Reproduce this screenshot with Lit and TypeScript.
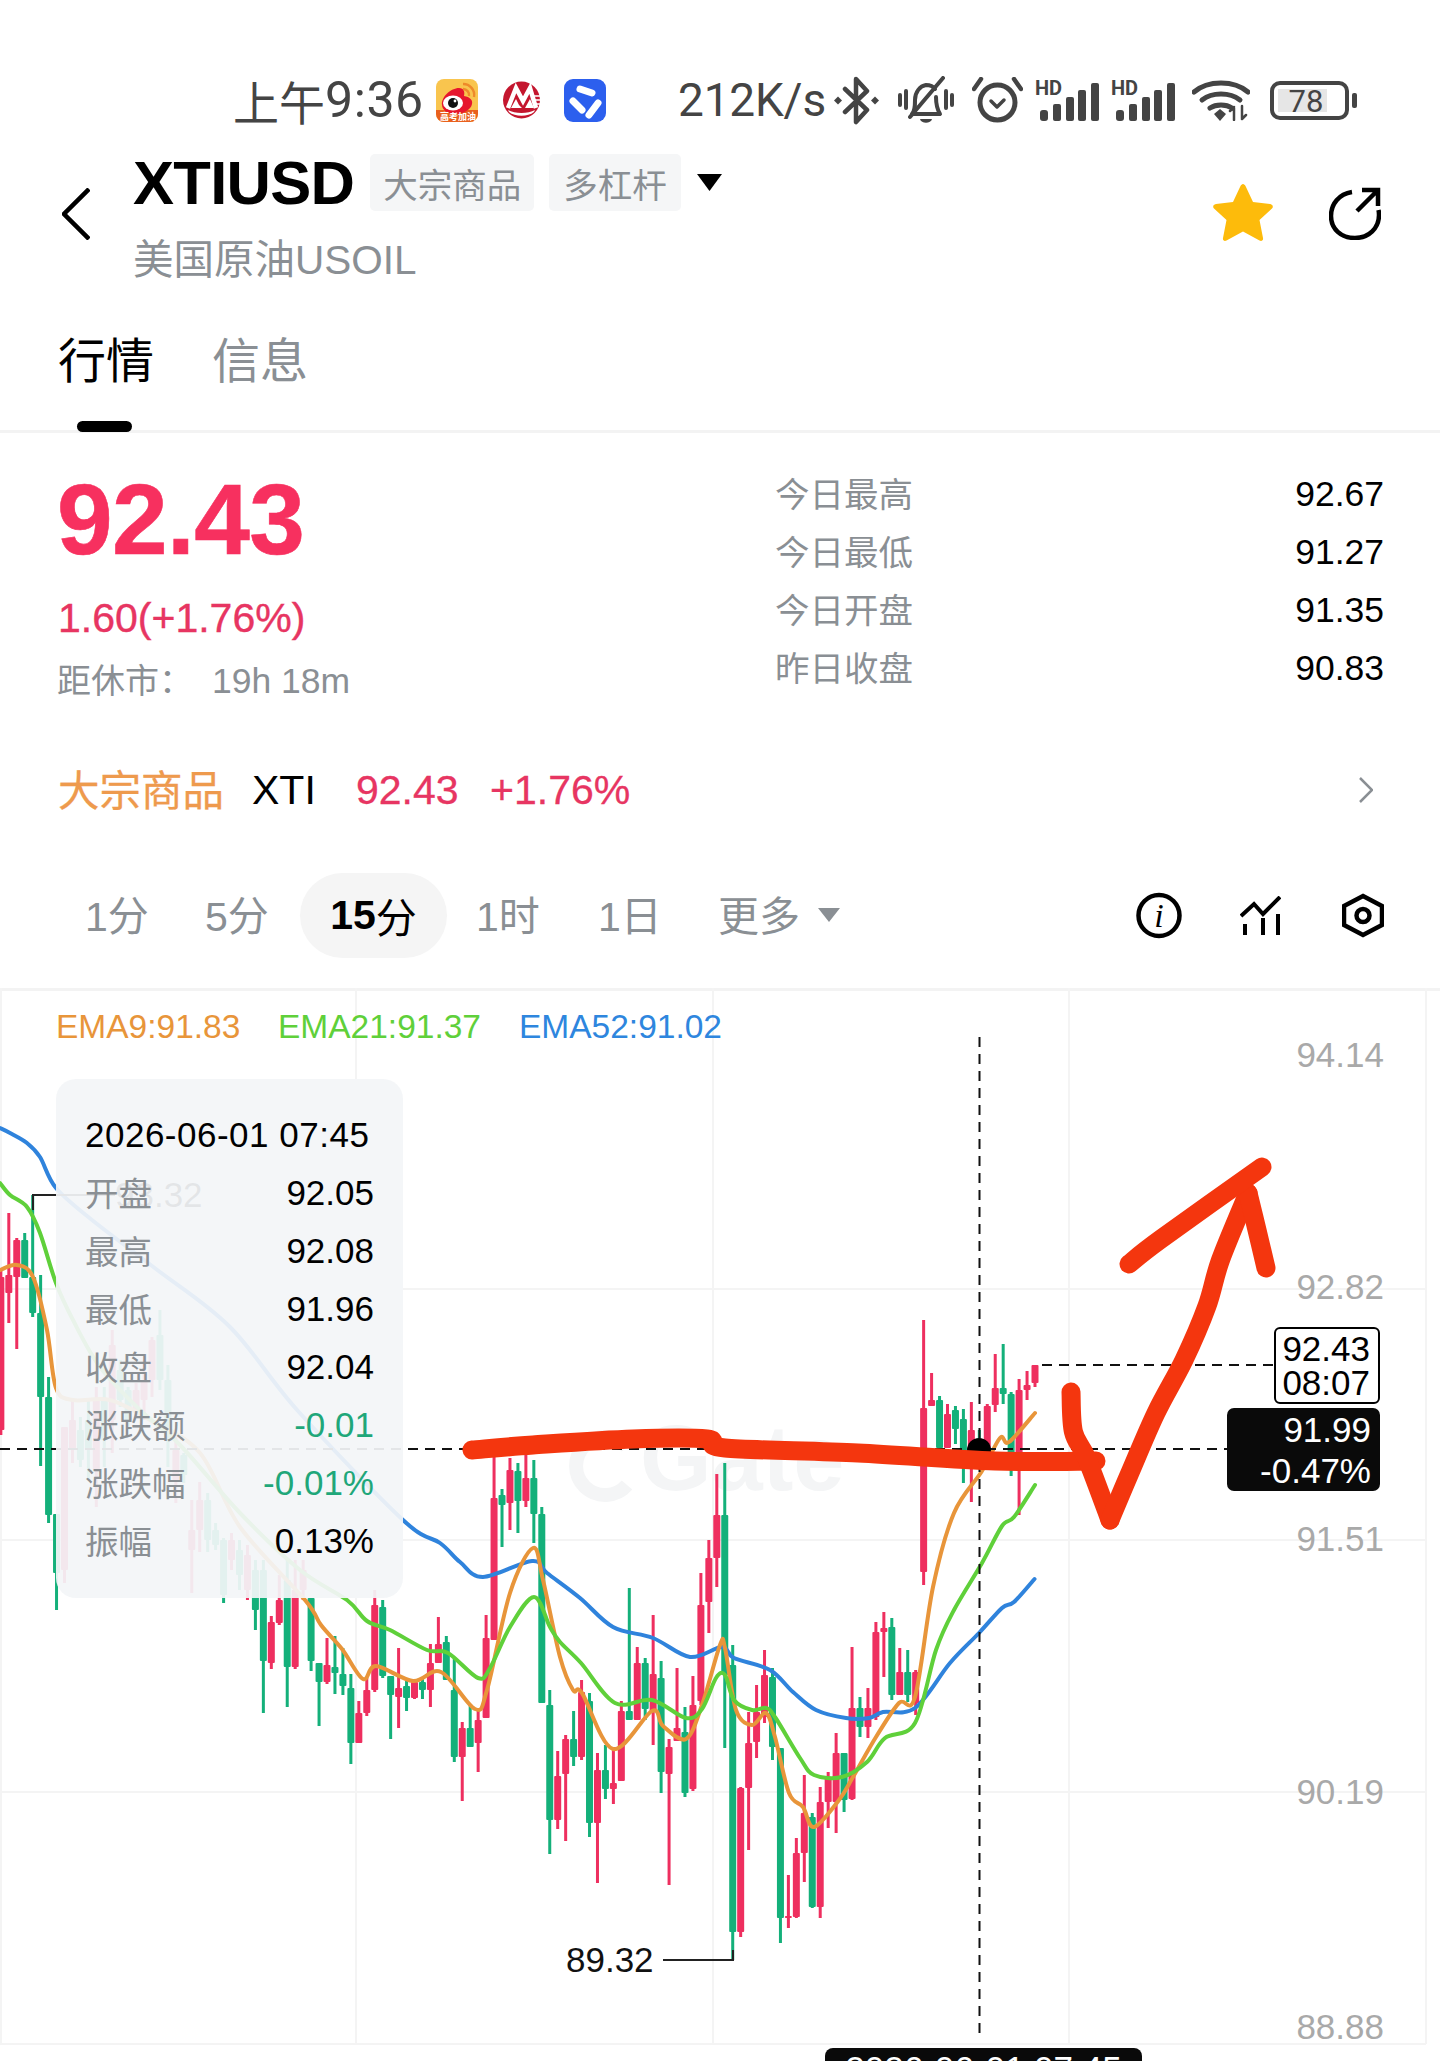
import { LitElement, html, css, svg } from "lit";
import { customElement } from "lit/decorators.js";

const RED = "#ee2f5f";
const GREEN = "#14b07a";

type C = [number, number, number, number, number, 0 | 1];
// index, wick top, wick bottom, body top, body bottom, 0 = red 1 = green
const CANDLES: C[] = [
  [0, 1270, 1435, 1277, 1430, 0], [1, 1213, 1323, 1275, 1293, 0], [2, 1238, 1349, 1240, 1277, 0],
  [3, 1233, 1278, 1240, 1278, 1], [4, 1195, 1317, 1277, 1313, 1], [5, 1275, 1466, 1313, 1397, 1],
  [6, 1377, 1523, 1397, 1515, 1], [7, 1514, 1610, 1514, 1573, 1], [8, 1427, 1583, 1427, 1570, 0],
  [9, 1400, 1463, 1420, 1450, 0], [10, 1417, 1467, 1430, 1460, 1], [11, 1400, 1480, 1420, 1450, 1],
  [12, 1387, 1507, 1400, 1470, 0], [13, 1387, 1467, 1400, 1440, 1], [14, 1330, 1453, 1345, 1420, 0],
  [15, 1360, 1407, 1370, 1400, 1], [16, 1387, 1430, 1390, 1420, 1], [17, 1383, 1417, 1390, 1410, 0],
  [18, 1360, 1420, 1380, 1400, 0], [19, 1337, 1397, 1340, 1380, 0], [20, 1310, 1390, 1335, 1380, 1],
  [21, 1365, 1467, 1380, 1440, 1], [22, 1437, 1503, 1450, 1480, 0], [23, 1453, 1483, 1455, 1475, 1],
  [24, 1500, 1593, 1530, 1550, 0], [25, 1482, 1552, 1500, 1530, 0], [26, 1493, 1552, 1500, 1540, 1],
  [27, 1523, 1550, 1530, 1545, 1], [28, 1538, 1603, 1540, 1595, 1], [29, 1533, 1570, 1540, 1560, 0],
  [30, 1540, 1590, 1550, 1575, 1], [31, 1545, 1600, 1555, 1590, 0], [32, 1560, 1630, 1570, 1610, 1],
  [33, 1560, 1713, 1570, 1661, 1], [34, 1616, 1669, 1622, 1663, 0], [35, 1575, 1625, 1600, 1623, 0],
  [36, 1560, 1707, 1580, 1667, 1], [37, 1560, 1669, 1590, 1667, 0], [38, 1560, 1600, 1570, 1590, 0],
  [39, 1598, 1671, 1598, 1661, 1], [40, 1663, 1726, 1663, 1682, 1], [41, 1638, 1684, 1665, 1682, 0],
  [42, 1636, 1694, 1667, 1673, 1], [43, 1648, 1695, 1674, 1686, 1], [44, 1674, 1764, 1688, 1743, 1],
  [45, 1701, 1743, 1713, 1743, 0], [46, 1678, 1716, 1690, 1713, 0], [47, 1590, 1692, 1605, 1690, 0],
  [48, 1600, 1678, 1607, 1676, 1], [49, 1676, 1739, 1676, 1695, 1], [50, 1648, 1728, 1688, 1697, 0],
  [51, 1678, 1711, 1686, 1698, 1], [52, 1680, 1699, 1682, 1698, 0], [53, 1678, 1699, 1682, 1690, 1],
  [54, 1644, 1707, 1663, 1690, 0], [55, 1617, 1663, 1644, 1663, 0], [56, 1636, 1680, 1642, 1680, 1],
  [57, 1659, 1762, 1690, 1757, 1], [58, 1722, 1801, 1728, 1757, 0], [59, 1705, 1747, 1728, 1747, 1],
  [60, 1709, 1772, 1720, 1743, 0], [61, 1615, 1718, 1638, 1718, 0], [62, 1445, 1640, 1498, 1640, 0],
  [63, 1489, 1547, 1495, 1505, 1], [64, 1458, 1530, 1470, 1503, 0], [65, 1463, 1533, 1471, 1501, 1],
  [66, 1445, 1507, 1478, 1501, 0], [67, 1460, 1543, 1478, 1514, 1], [68, 1507, 1703, 1514, 1703, 1],
  [69, 1690, 1854, 1705, 1820, 1], [70, 1751, 1829, 1776, 1820, 0], [71, 1735, 1841, 1739, 1774, 0],
  [72, 1711, 1766, 1739, 1757, 1], [73, 1680, 1760, 1692, 1757, 0], [74, 1693, 1837, 1701, 1823, 1],
  [75, 1753, 1883, 1770, 1823, 0], [76, 1745, 1799, 1770, 1789, 1], [77, 1747, 1804, 1783, 1789, 0],
  [78, 1701, 1781, 1711, 1781, 0], [79, 1588, 1720, 1711, 1720, 1], [80, 1647, 1720, 1663, 1720, 0],
  [81, 1658, 1720, 1663, 1709, 1], [82, 1615, 1745, 1674, 1712, 0], [83, 1661, 1793, 1678, 1772, 1],
  [84, 1739, 1885, 1747, 1774, 0], [85, 1668, 1741, 1728, 1741, 0], [86, 1707, 1797, 1732, 1793, 1],
  [87, 1676, 1791, 1705, 1789, 0], [88, 1573, 1705, 1605, 1701, 0], [89, 1540, 1633, 1558, 1602, 0],
  [90, 1474, 1587, 1515, 1558, 0], [91, 1463, 1748, 1515, 1675, 1], [92, 1645, 1960, 1665, 1932, 1],
  [93, 1787, 1937, 1788, 1932, 0], [94, 1712, 1850, 1743, 1788, 0], [95, 1685, 1758, 1712, 1742, 0],
  [96, 1650, 1723, 1675, 1717, 0], [97, 1668, 1760, 1677, 1747, 1], [98, 1748, 1943, 1748, 1918, 1],
  [99, 1875, 1928, 1916, 1918, 0], [100, 1838, 1918, 1853, 1917, 0], [101, 1775, 1882, 1813, 1853, 0],
  [102, 1813, 1908, 1817, 1907, 1], [103, 1787, 1918, 1802, 1907, 0], [104, 1772, 1828, 1777, 1802, 0],
  [105, 1733, 1833, 1753, 1802, 0], [106, 1753, 1812, 1753, 1800, 1], [107, 1647, 1800, 1708, 1799, 0],
  [108, 1697, 1737, 1708, 1727, 1], [109, 1688, 1738, 1708, 1727, 0], [110, 1622, 1720, 1632, 1717, 0],
  [111, 1612, 1677, 1628, 1632, 0], [112, 1618, 1700, 1627, 1695, 1], [113, 1648, 1695, 1672, 1695, 0],
  [114, 1650, 1702, 1672, 1695, 1], [115, 1670, 1715, 1672, 1703, 0], [116, 1320, 1585, 1408, 1572, 0],
  [117, 1373, 1406, 1400, 1406, 0], [118, 1396, 1450, 1400, 1448, 1], [119, 1404, 1448, 1414, 1448, 0],
  [120, 1406, 1444, 1410, 1429, 1], [121, 1409, 1483, 1419, 1452, 1], [122, 1402, 1502, 1430, 1450, 0],
  [123, 1430, 1455, 1440, 1452, 1], [124, 1404, 1459, 1406, 1448, 0], [125, 1354, 1412, 1388, 1405, 0],
  [126, 1344, 1404, 1388, 1394, 1], [127, 1392, 1476, 1394, 1455, 1], [128, 1379, 1515, 1390, 1455, 0],
  [129, 1371, 1400, 1385, 1390, 0], [130, 1365, 1387, 1365, 1383, 0],
];

const BLUE: number[][] = [[0,1128],[10,1133],[27,1143],[40,1157],[56,1188],[92,1220],[156,1269],[230,1327],[298,1411],[403,1520],[440,1543],[460,1562],[483,1577],[532,1561],[547,1573],[580,1598],[613,1627],[653,1638],[690,1657],[722,1647],[734,1658],[770,1670],[793,1692],[816,1710],[846,1718],[869,1718],[883,1712],[915,1708],[950,1663],[979,1633],[1002,1608],[1014,1602],[1034.5,1579]];
const LIME: number[][] = [[0,1183],[10,1195],[27,1207],[40,1233],[56,1283],[73,1320],[100,1367],[140,1410],[180,1445],[240,1513],[300,1570],[347,1600],[367,1621],[390,1630],[427,1650],[448,1653],[478,1678],[490,1668],[510,1627],[534,1597],[550,1627],[560,1642],[581,1663],[615,1703],[652,1700],[686,1718],[702,1709],[716,1678],[725,1675],[734,1700],[752,1710],[766,1708],[775,1717],[800,1758],[814,1775],[842,1777],[867,1762],[885,1738],[915,1723],[936,1650],[954,1610],[982,1563],[1002,1526],[1014,1517],[1035,1485]];
const ORANGE: number[][] = [[0,1270],[17,1265],[33,1277],[47,1330],[56,1388],[73,1400],[110,1400],[150,1420],[200,1453],[240,1527],[305,1600],[321,1625],[342,1649],[363,1679],[376,1666],[413,1681],[441,1672],[475,1709],[487,1690],[510,1593],[533,1548],[543,1580],[560,1657],[573,1690],[582,1693],[613,1749],[652,1711],[663,1726],[686,1739],[702,1705],[720,1645],[725,1648],[736,1710],[752,1725],[766,1713],[775,1737],[789,1793],[803,1807],[814,1827],[839,1800],[853,1777],[876,1737],[899,1703],[915,1697],[933,1587],[954,1513],[982,1471],[1000,1438],[1009,1442],[1035,1413]];

const INK = [
  [[472,1450],[533,1445],[633,1439],[707,1439],[725,1448],[858,1453],[995,1461],[1096,1461]],
  [[1071,1392],[1073.5,1432],[1087,1459],[1110,1520]],
  [[1110,1520],[1129,1475],[1156,1413],[1184,1360],[1207,1306],[1220.5,1260],[1248,1193]],
  [[1248,1193],[1257,1230],[1266,1268]],
  [[1129,1264],[1161,1239],[1262,1167]],
];

// Catmull-Rom through the sampled points, so the traced lines stay smooth.
const smooth = (p: number[][]) => {
  let d = `M${p[0][0]} ${p[0][1]}`;
  for (let i = 0; i < p.length - 1; i++) {
    const a = p[Math.max(i - 1, 0)], b = p[i], c = p[i + 1], e = p[Math.min(i + 2, p.length - 1)];
    const x1 = b[0] + (c[0] - a[0]) / 6, y1 = b[1] + (c[1] - a[1]) / 6;
    const x2 = c[0] - (e[0] - b[0]) / 6, y2 = c[1] - (e[1] - b[1]) / 6;
    d += `C${x1.toFixed(1)} ${y1.toFixed(1)} ${x2.toFixed(1)} ${y2.toFixed(1)} ${c[0]} ${c[1]}`;
  }
  return d;
};

const AXIS: [string, number][] = [["94.14", 1054], ["92.82", 1286], ["91.51", 1538], ["90.19", 1791], ["88.88", 2026]];
const TIP: [string, string, string][] = [
  ["开盘", "92.05", ""], ["最高", "92.08", ""], ["最低", "91.96", ""], ["收盘", "92.04", ""],
  ["涨跌额", "-0.01", "down"], ["涨跌幅", "-0.01%", "down"], ["振幅", "0.13%", ""],
];
const STATS: [string, string][] = [["今日最高", "92.67"], ["今日最低", "91.27"], ["今日开盘", "91.35"], ["昨日收盘", "90.83"]];

const hdSignal = html`<svg class="hd" viewBox="0 0 62 41">
  <text x="-2" y="15" class="hdt">HD</text>
  <rect x="3" y="30" width="8" height="11" rx="3" fill="#444"/>
  <rect x="16" y="24" width="8" height="17" rx="2" fill="#444"/>
  <rect x="29" y="17" width="8" height="24" rx="2" fill="#444"/>
  <rect x="41" y="10" width="8" height="31" rx="2" fill="#444"/>
  <rect x="54" y="3" width="8" height="38" rx="2" fill="#444"/>
</svg>`;

@customElement("app-root")
export class AppRoot extends LitElement {
  static styles = css`
    :host { display: block; width: 1440px; height: 2061px; overflow: hidden; background: #fff; color: #000;
      font-family: "Liberation Sans", "Noto Sans CJK SC", sans-serif; }
    svg { display: block; flex: none; }

    .status { height: 141px; box-sizing: border-box; padding: 60px 0 1px 233px; display: flex; align-items: center; color: #444; font-family: Roboto, "Noto Sans CJK SC", sans-serif; }
    .time, .speed { height: 80px; display: flex; align-items: center; white-space: nowrap; flex: none; font-size: 50px; letter-spacing: .6px; }
    .time { width: 189px; }
    .time .cjk { font-size: 46px; letter-spacing: 0; }
    .speed { width: 147px; margin-left: 72px; font-size: 46px; letter-spacing: -.2px; }
    .weibo { width: 42px; height: 43px; margin-left: 14px; }
    .cmb { width: 37px; height: 38px; margin-left: 25px; }
    .quark { width: 42px; height: 43px; margin-left: 24px; }
    .bt { width: 45px; height: 49px; margin-left: 9px; }
    .bell { width: 56px; height: 48px; margin-left: 19px; }
    .alarm { width: 51px; height: 46px; margin-left: 18px; }
    .hd { width: 62px; height: 41px; margin-left: 14px; overflow: visible; }
    .wifi { width: 58px; height: 41px; margin-left: 17px; }
    .batt { width: 87px; height: 39px; margin-left: 20px; }
    .hdt { font: 700 20px Roboto, sans-serif; fill: #444; }
    .battt { font: 400 31px Roboto, sans-serif; fill: #444; }
    .wbt { font: 700 9px "Noto Sans CJK SC", sans-serif; fill: #fff; }

    .header { height: 174px; box-sizing: border-box; padding: 13px 59px 0 62px; display: flex; align-items: flex-start; }
    .back { width: 28px; height: 52px; margin-top: 34px; }
    .head-main { margin-left: 43px; flex: 1; }
    .title-row { display: flex; align-items: center; height: 57px; }
    .title { font-size: 61.500px; font-weight: 700; letter-spacing: -.7px; line-height: 57px; }
    .tag { height: 57px; box-sizing: border-box; display: flex; align-items: center; background: #f5f6f7; border-radius: 5px; padding: 0 13px; font-size: 34.500px; color: #8a8f94; }
    .tag.one { margin-left: 16px; }
    .tag.two { margin-left: 15px; padding: 0 14px; }
    .caret { width: 25px; height: 17px; margin: 0 0 0 16px; }
    .sub { font-size: 40.500px; line-height: 46px; margin-top: 26px; color: #8a8f94; }
    .star { width: 60px; height: 58px; margin-top: 29px; }
    .share { width: 52px; height: 53px; margin: 33px 0 0 56px; }

    .tabs { height: 118px; box-sizing: border-box; border-bottom: 3px solid #f3f3f3; padding-left: 58px; display: flex; gap: 58px; }
    .tab { font-size: 48px; line-height: 94px; color: #8a8f94; }
    .tab.on { color: #000; position: relative; }
    .tab.on::after { content: ""; position: absolute; left: 19px; width: 55px; height: 11px; top: 106px; background: #000; border-radius: 6px; }

    .quote { height: 304px; display: flex; box-sizing: border-box; padding: 0 56px 0 59px; }
    .q-left { width: 716px; flex: none; }
    .price { font-size: 100px; font-weight: 700; color: #f7305f; letter-spacing: -.6px; line-height: 100px; margin: 36px 0 0 -2px; -webkit-text-stroke: .6px #f7305f; }
    .chg { font-size: 41px; line-height: 46px; margin: 26px 0 0 -1px; color: #e73562; -webkit-text-stroke: .4px #e73562; }
    .close { font-size: 34px; line-height: 40px; margin-top: 20px; color: #8a8f94; margin-left: -2px; display: flex; }
    .close b { font-weight: 400; margin-left: 19px; font-size: 35.500px; }
    .q-right { flex: 1; padding-top: 32px; }
    .stat { height: 58px; display: flex; justify-content: space-between; align-items: center; font-size: 34.500px; color: #8a8f94; }
    .stat span { transform: translateY(-2px); }
    .stat b { font-weight: 400; color: #000; font-size: 35.500px; }

    .market { height: 106px; box-sizing: border-box; padding: 0 67px 0 58px; display: flex; align-items: center; font-size: 41px; color: #e73562; -webkit-text-stroke: .3px #e73562; }
    .market .m1 { color: #ee9a4d; width: 194px; flex: none; font-size: 41.500px; -webkit-text-stroke: .3px #ee9a4d; transform: translateY(-2px); }
    .market .m2 { color: #000; width: 104px; flex: none; -webkit-text-stroke: 0; }
    .market .m3 { width: 134px; flex: none; }
    .market .m4 { flex: 1; }
    .chev { width: 14px; height: 26px; }

    .frames { height: 145px; box-sizing: border-box; padding: 0 56px 1px 0; display: flex; align-items: center; font-size: 41px; color: #8a8f94; }
    .fr { white-space: nowrap; flex: none; }
    .f1, .f2, .f3, .f4, .f5 { transform: translateY(-2px); }
    .f1 { margin-left: 85px; width: 120px; }
    .f2 { width: 95px; }
    .pill { width: 147px; height: 85px; box-sizing: border-box; display: flex; align-items: center; justify-content: center; background: #f5f5f5; border-radius: 43px; color: #000; }
    .pill b { font-weight: 700; }
    .f3 { margin-left: 29px; width: 122px; }
    .f4 { width: 120px; }
    .f5 { width: 100px; }
    .fcaret { width: 22px; height: 14px; }
    .spacer { flex: 1; }
    .ic-info { width: 46px; height: 47px; }
    .ic-chart { width: 41px; height: 39px; margin-left: 58px; }
    .ic-hex { width: 42px; height: 45px; margin-left: 61px; }
    .itxt { font: italic 400 34px "Liberation Serif", serif; fill: #000; }

    .chart { position: relative; height: 1073px; overflow: hidden; }
    .plot { position: absolute; left: 0; top: 0; }
    .axis { font: 400 35px "Liberation Sans", sans-serif; fill: #a9a9a9; }
    .mark { font: 400 35px "Liberation Sans", sans-serif; fill: #111; }
    .wm { font: 700 92px "Liberation Sans", sans-serif; fill: #f4f5f6; }
    .ema { position: absolute; left: 56px; top: 19px; display: flex; font-size: 33.500px; line-height: 40px; white-space: nowrap; }
    .e1 { color: #e8953a; width: 222px; }
    .e2 { color: #5fd03a; width: 241px; }
    .e3 { color: #2e86de; }
    .panel { position: absolute; left: 56px; top: 91px; width: 347px; height: 519px; box-sizing: border-box; padding: 27px 29px 0 29px; background: rgba(243, 245, 248, .93); border-radius: 20px; }
    .when { height: 58px; display: flex; align-items: center; font-size: 35px; letter-spacing: .5px; white-space: nowrap; color: #000; }
    .row { height: 58px; display: flex; justify-content: space-between; align-items: center; font-size: 33.500px; color: #8a8f94; }
    .row span { transform: translateY(-2px); }
    .row b { font-weight: 400; font-size: 35px; color: #000; }
    .row b.down { color: #1fa77a; }
    .box { position: absolute; display: flex; flex-direction: column; align-items: flex-end; box-sizing: border-box; font-size: 35px; }
    .b1 { left: 1274px; top: 339px; width: 106px; height: 77px; background: #fff; border: 2px solid #000; border-radius: 6px; justify-content: center; line-height: 34px; padding-right: 8px; }
    .b2 { left: 1227px; top: 420px; width: 153px; height: 83px; background: #0a0a0a; border-radius: 7px; color: #fff; justify-content: center; line-height: 41px; padding-right: 9px; }
    .b3 { left: 825px; top: 1060px; width: 317px; height: 42px; background: #0a0a0a; border-radius: 8px; color: #fff; align-items: center; justify-content: center; line-height: 42px; white-space: nowrap; }
    .ink { position: absolute; left: 0; top: 0; pointer-events: none; }
  `;

  private candles() {
    return CANDLES.map(([i, a, b, c, d, g]) => {
      const x = 0.85 + 7.955 * i;
      const col = g ? GREEN : RED;
      return svg`<rect x=${x - 1.5} y=${a} width="3" height=${b - a} fill=${col}/><rect x=${x - 3.5} y=${c} width="7" height=${Math.max(d - c, 2)} rx="1" fill=${col}/>`;
    });
  }

  private plot() {
    const grid = "#f4f4f4";
    return html`<svg class="plot" width="1440" height="1073" viewBox="0 988 1440 1073">
      <rect x="0" y="988" width="1440" height="3" fill="#f3f3f3"/>
      ${[1, 356, 713, 1069, 1426].map((x) => svg`<rect x=${x - 1} y="988" width="2" height="1056" fill=${grid}/>`)}
      ${[1289, 1540, 1792, 2044].map((y) => svg`<rect x="0" y=${y - 1} width="1426" height="2" fill=${grid}/>`)}
      <path d="M627 1447a29 29 0 1 0 0 38" fill="none" stroke="#f4f5f6" stroke-width="14"/>
      <text x="640" y="1490" class="wm">Gate</text>
      ${AXIS.map(([t, y]) => svg`<text x="1384" y=${y + 12.5} text-anchor="end" class="axis">${t}</text>`)}
      ${this.candles()}
      <path d=${smooth(BLUE)} fill="none" stroke="#2f83dc" stroke-width="4" stroke-linecap="round"/>
      <path d=${smooth(ORANGE)} fill="none" stroke="#e8953a" stroke-width="4" stroke-linecap="round"/>
      <path d=${smooth(LIME)} fill="none" stroke="#5fd03a" stroke-width="4" stroke-linecap="round"/>
      <line x1="979.500" y1="1037" x2="979.500" y2="2038" stroke="#111" stroke-width="2" stroke-dasharray="10 7"/>
      <line x1="0" y1="1449" x2="1227" y2="1449" stroke="#111" stroke-width="2" stroke-dasharray="10 7"/>
      <line x1="1042" y1="1365" x2="1274" y2="1365" stroke="#111" stroke-width="2" stroke-dasharray="10 7"/>
      <circle cx="979" cy="1450" r="12" fill="#000"/>
      <path d="M33 1210V1195H115" fill="none" stroke="#222" stroke-width="2"/>
      <text x="115" y="1207" class="mark">93.32</text>
      <path d="M663 1960H733V1950" fill="none" stroke="#222" stroke-width="2"/>
      <text x="566" y="1972" class="mark">89.32</text>
    </svg>`;
  }

  private inkLayer() {
    return html`<svg class="ink" width="1440" height="1073" viewBox="0 988 1440 1073">
      ${INK.map((p) => svg`<path d=${smooth(p)} fill="none" stroke="#f4360e" stroke-width="19" stroke-linecap="round" stroke-linejoin="round"/>`)}
    </svg>`;
  }

  render() {
    return html`
      <div class="status">
        <div class="time"><span class="cjk">上午</span>9:36</div>
        <svg class="weibo" viewBox="0 0 42 43">
          <rect width="42" height="43" rx="8" fill="#f9c54e"/>
          <path d="M0 31H42V35a8 8 0 0 1-8 8H8a8 8 0 0 1-8-8Z" fill="#e9601d"/>
          <path d="M6 26c-1-8 9-17 17-17 5 0 6 4 5 8 6 1 9 4 8 8-1 6-9 10-17 10C12 35 6 31 6 26Z" fill="#e6162d"/>
          <ellipse cx="17" cy="24" rx="10" ry="7.500" fill="#fff"/>
          <circle cx="17" cy="24" r="5" fill="#111"/>
          <circle cx="19" cy="22" r="1.400" fill="#fff"/>
          <path d="M27 5a11 11 0 0 1 11 13M27 10a6 6 0 0 1 6 7" fill="none" stroke="#ee8a2a" stroke-width="2.400"/>
          <text x="4" y="41" class="wbt">高考加油</text>
        </svg>
        <svg class="cmb" viewBox="0 0 37 38">
          <circle cx="18.500" cy="19" r="18.500" fill="#c4162e"/>
          <path d="M5 27 13 7 20 20 27 7 33 27" fill="none" stroke="#fff" stroke-width="4.500" stroke-linejoin="miter"/>
          <path d="M8 27 13 18 16 24 19 27ZM22 27 27 18 31 27Z" fill="#fff"/>
          <path d="M5 29c7 4 20 4 27 0l-1 2c-6 5-19 5-25 0Z" fill="#fff"/>
          <path d="M28 15h9M29 19h8M30 23h7" stroke="#fff" stroke-width="1.500"/>
        </svg>
        <svg class="quark" viewBox="0 0 42 43">
          <rect width="42" height="43" rx="9" fill="#2c5fee"/>
          <path d="M16 10 28 14M9 22 18 31M34 24 25 36" fill="none" stroke="#fff" stroke-width="7" stroke-linecap="round"/>
        </svg>
        <div class="speed">212K/s</div>
        <svg class="bt" viewBox="0 0 45 49" fill="none" stroke="#444" stroke-width="4.500" stroke-linejoin="round" stroke-linecap="round">
          <path d="M11 13 33 34 22 46V3l11 12-22 21"/>
          <path d="M0 24.500 4 20.500 8 24.500 4 28.500ZM37 24.500 41 20.500 45 24.500 41 28.500Z" fill="#444" stroke="none"/>
        </svg>
        <svg class="bell" viewBox="0 0 56 48" fill="none" stroke="#444" stroke-width="4" stroke-linecap="round" stroke-linejoin="round">
          <path d="M14 38c3-3 3-7 3-14 0-8 5-14 11-15 3 0 7 1 9 4M38 21c0 7 1 12 4 17H14"/>
          <path d="M12 41 45 2"/>
          <path d="M2 19v10M8 15v17M48 15v17M54 19v10"/>
          <path d="M22 43c1 5 11 5 12 0Z" fill="#444" stroke="none"/>
        </svg>
        <svg class="alarm" viewBox="0 0 51 46" fill="none" stroke="#444" stroke-linecap="round" stroke-linejoin="round">
          <circle cx="25.500" cy="25.500" r="17.500" stroke-width="5"/>
          <path d="M2 12 9 2M49 12 42 2" stroke-width="4.500"/>
          <path d="M19 24l6 6 7-7" stroke-width="3.500"/>
        </svg>
        ${hdSignal}${hdSignal}
        <svg class="wifi" viewBox="0 0 58 41" fill="none" stroke="#444" stroke-width="5" stroke-linecap="round">
          <path d="M2 12C16 0 42 0 56 12"/>
          <path d="M10 20c10-8 28-8 38 0"/>
          <path d="M18 28c6-4 16-4 22 0"/>
          <path d="M22 34 28 29 34 34 28 41Z" fill="#444" stroke="none"/>
          <path d="M42 28v12M38 31l4-4M50 26v12M54 35l-4 4" stroke-width="2.500"/>
        </svg>
        <svg class="batt" viewBox="0 0 87 39">
          <rect x="2" y="2" width="75" height="35" rx="8" fill="#fff" stroke="#444" stroke-width="4"/>
          <rect x="8" y="8" width="49" height="23" fill="#e6e6e6"/>
          <rect x="82" y="12" width="5" height="15" rx="2" fill="#444"/>
          <text x="36" y="31" text-anchor="middle" class="battt">78</text>
        </svg>
      </div>

      <div class="header">
        <svg class="back" viewBox="0 0 28 52"><path d="M27 1 2 26l25 25" fill="none" stroke="#000" stroke-width="4.500"/></svg>
        <div class="head-main">
          <div class="title-row">
            <div class="title">XTIUSD</div>
            <div class="tag one">大宗商品</div>
            <div class="tag two">多杠杆</div>
            <svg class="caret" viewBox="0 0 25 17"><path d="M0 0H25L12.500 17Z" fill="#000"/></svg>
          </div>
          <div class="sub">美国原油USOIL</div>
        </div>
        <svg class="star" viewBox="0 0 60 58"><path d="M30 1c1 0 2 1 2.500 2l7.500 16 17 2c3 .5 3.500 3 2 4.500L46.500 37 50 55c.5 2.500-1.500 3.500-3.500 2.500L30 48.500 13.500 57.500C11.500 58.500 9.500 57.500 10 55l3.500-18L1 25.500C-.5 24 0 21.500 3 21l17-2 7.500-16C28 2 29 1 30 1Z" fill="#fdbb0b"/></svg>
        <svg class="share" viewBox="0 0 52 53" fill="none" stroke="#000" stroke-width="4.500">
          <path d="M23 5C10 7 2 17 2 29c0 13 10 22 24 22 14 0 24-10 24-23 0-2 0-3-.5-5"/>
          <path d="M28 24 48 4M33 3H49V19" stroke-linejoin="miter"/>
        </svg>
      </div>

      <div class="tabs">
        <div class="tab on">行情</div>
        <div class="tab">信息</div>
      </div>

      <div class="quote">
        <div class="q-left">
          <div class="price">92.43</div>
          <div class="chg">1.60(+1.76%)</div>
          <div class="close">距休市：<b>19h 18m</b></div>
        </div>
        <div class="q-right">
          ${STATS.map(([k, v]) => html`<div class="stat"><span>${k}</span><b>${v}</b></div>`)}
        </div>
      </div>

      <div class="market">
        <span class="m1">大宗商品</span>
        <span class="m2">XTI</span>
        <span class="m3">92.43</span>
        <span class="m4">+1.76%</span>
        <svg class="chev" viewBox="0 0 14 26"><path d="M1 1 13 13 1 25" fill="none" stroke="#8a8f94" stroke-width="2.500"/></svg>
      </div>

      <div class="frames">
        <span class="fr f1">1分</span>
        <span class="fr f2">5分</span>
        <span class="fr pill"><b>15</b>分</span>
        <span class="fr f3">1时</span>
        <span class="fr f4">1日</span>
        <span class="fr f5">更多</span>
        <svg class="fcaret" viewBox="0 0 22 14"><path d="M0 0H22L11 14Z" fill="#8a8f94"/></svg>
        <div class="spacer"></div>
        <svg class="ic-info" viewBox="0 0 46 47">
          <circle cx="23" cy="23.500" r="20.500" fill="none" stroke="#000" stroke-width="4.500"/>
          <text x="23" y="35" text-anchor="middle" class="itxt">i</text>
        </svg>
        <svg class="ic-chart" viewBox="0 0 41 39" fill="none" stroke="#000" stroke-width="4">
          <path d="M1 20 14 8l9 10L40 1"/>
          <path d="M5 28v11M23 22v17M38 18v21"/>
        </svg>
        <svg class="ic-hex" viewBox="0 0 42 45" fill="none" stroke="#000" stroke-width="4.500">
          <path d="M21 3 40 13V32L21 42 2 32V13Z"/>
          <circle cx="21" cy="22.500" r="6.500"/>
        </svg>
      </div>

      <div class="chart">
        ${this.plot()}
        <div class="ema">
          <span class="e1">EMA9:91.83</span>
          <span class="e2">EMA21:91.37</span>
          <span class="e3">EMA52:91.02</span>
        </div>
        <div class="panel">
          <div class="when">2026-06-01 07:45</div>
          ${TIP.map(([k, v, c]) => html`<div class="row"><span>${k}</span><b class=${c}>${v}</b></div>`)}
        </div>
        <div class="box b1"><span>92.43</span><span>08:07</span></div>
        <div class="box b2"><span>91.99</span><span>-0.47%</span></div>
        <div class="box b3">2026-06-01 07:45</div>
        ${this.inkLayer()}
      </div>
    `;
  }
}
